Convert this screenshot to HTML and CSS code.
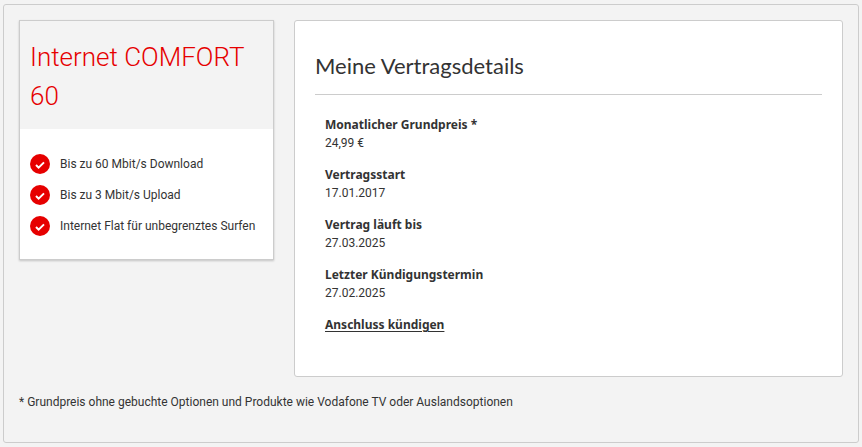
FILE: index.html
```html
<!DOCTYPE html>
<html lang="de">
<head>
    <meta charset="UTF-8">
    <meta name="viewport" content="width=device-width, initial-scale=1.0">
    <title>Meine Vertragsdetails</title>
    <link rel="stylesheet" href="styles.css">
</head>
<body>

<main class="panel">
    <div class="columns">
        <section class="tariff">
            <h1 class="tariff-title">Internet COMFORT 60</h1>
            <ul class="features">
                <li>
                    <svg class="check" viewBox="0 0 20 20" aria-hidden="true"><circle cx="10" cy="10" r="10"/><path d="M6 11l2.6 2.6L14 8.4"/></svg>
                    Bis zu 60 Mbit/s Download
                </li>
                <li>
                    <svg class="check" viewBox="0 0 20 20" aria-hidden="true"><circle cx="10" cy="10" r="10"/><path d="M6 11l2.6 2.6L14 8.4"/></svg>
                    Bis zu 3 Mbit/s Upload
                </li>
                <li>
                    <svg class="check" viewBox="0 0 20 20" aria-hidden="true"><circle cx="10" cy="10" r="10"/><path d="M6 11l2.6 2.6L14 8.4"/></svg>
                    Internet Flat für unbegrenztes Surfen
                </li>
            </ul>
        </section>

        <section class="contract">
            <h2 class="contract-title">Meine Vertragsdetails</h2>
            <dl class="details">
                <dt>Monatlicher Grundpreis *</dt>
                <dd>24,99 €</dd>
                <dt>Vertragsstart</dt>
                <dd>17.01.2017</dd>
                <dt>Vertrag läuft bis</dt>
                <dd>27.03.2025</dd>
                <dt>Letzter Kündigungstermin</dt>
                <dd>27.02.2025</dd>
            </dl>
            <a class="cancel-link" href="#">Anschluss kündigen</a>
        </section>
    </div>

    <p class="footnote">* Grundpreis ohne gebuchte Optionen und Produkte wie Vodafone TV oder Auslandsoptionen</p>
</main>

</body>
</html>
```

FILE: styles.css
```css
* {
    box-sizing: border-box;
}
body {
    margin: 4px 3px;
    background-color: #f3f3f3;
    color: #333;
    font-family: Roboto, sans-serif;
    font-size: 12px;
    line-height: 18px;
}
h1, h2, ul, dl, dd, p {
    margin: 0;
    padding: 0;
}
.panel {
    padding: 15px 15px 31px;
    border: 1px solid #ccc;
    border-radius: 3px;
}
.columns {
    display: grid;
    grid-template-columns: 255px 1fr;
    gap: 20px;
    align-items: start;
}

/* tariff box */
.tariff {
    background-color: #fff;
    border: 1px solid #ccc;
    box-shadow: 0 1px 2px rgba(0, 0, 0, 0.2);
}
.tariff-title {
    padding: 17px 10px 13px;
    background-color: #f3f3f3;
    color: #e60000;
    font-size: 26px;
    font-weight: 300;
    line-height: 39px;
}
.features {
    display: flex;
    flex-direction: column;
    gap: 11px;
    padding: 25px 10px 23px;
    list-style: none;
}
.features li {
    display: flex;
    align-items: center;
    gap: 10px;
    line-height: 20px;
    white-space: nowrap;
}
.check {
    flex: none;
    width: 20px;
    height: 20px;
}
.check circle {
    fill: #e60000;
}
.check path {
    fill: none;
    stroke: #fff;
    stroke-width: 2;
}

/* contract details */
.contract {
    padding: 27px 20px 42px;
    background-color: #fff;
    border: 1px solid #ccc;
    border-radius: 3px;
}
.contract-title {
    padding-bottom: 10px;
    border-bottom: 1px solid #ccc;
    font-family: Lato, sans-serif;
    font-size: 22px;
    font-weight: 400;
    line-height: 36px;
}
.details {
    padding: 21px 10px 0;
}
.details dt,
.cancel-link {
    font-family: "Noto Sans", sans-serif;
    font-weight: 700;
}
.details dd {
    margin-bottom: 14px;
}
.cancel-link {
    display: block;
    width: fit-content;
    margin-left: 10px;
    color: #333;
    text-underline-offset: 2px;
}

.footnote {
    margin-top: 16px;
}
```
